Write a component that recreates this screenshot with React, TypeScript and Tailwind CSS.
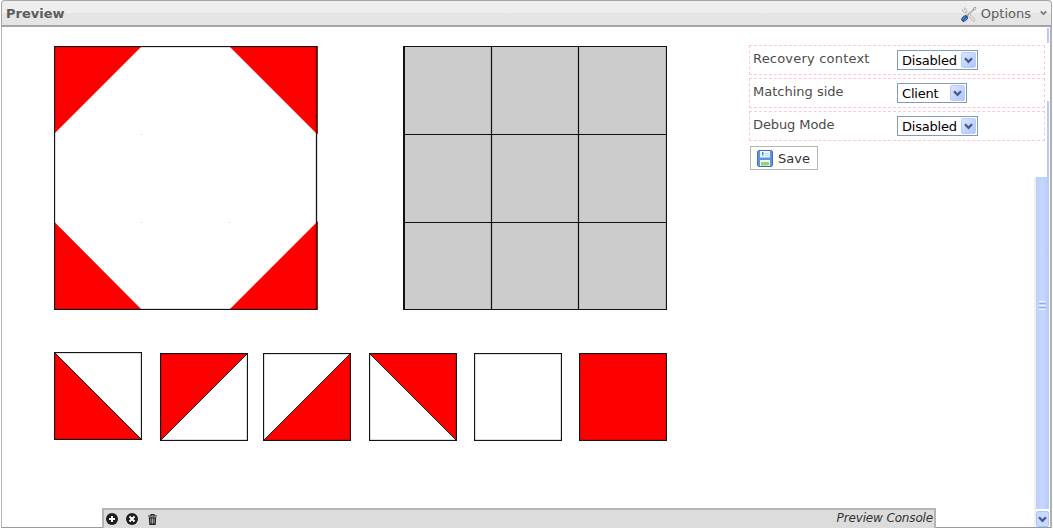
import React from "react";

function Chevron({ className, color = "#435a8c" }: { className: string; color?: string }) {
  return (
    <svg className={className} viewBox="0 0 9 7" fill="none" stroke={color} strokeWidth="2.3">
      <path d="M1 1.3 4.5 4.8 8 1.3" />
    </svg>
  );
}

function Select({ value, width }: { value: string; width: string }) {
  return (
    <div className={`flex h-5 items-center justify-between border border-[#7f9db9] bg-white pl-1 pr-px ${width}`}>
      <span className="pt-px text-[13px] leading-[19px] tracking-[-0.2px] text-black">{value}</span>
      <span className="flex h-4 w-[15px] items-center justify-center rounded-[2px] border border-[#b9cbf8] bg-linear-to-br from-[#dbe6ff] to-[#afc6fb]">
        <Chevron className="h-[7px] w-[9px]" />
      </span>
    </div>
  );
}

function Field({ label, value, width, tracking }: { label: string; value: string; width: string; tracking: string }) {
  return (
    <div className="flex h-[30px] w-[296px] border border-dashed border-[#ffc6d4] pl-[3px] pt-1">
      <div className={`w-36 shrink-0 text-[13px] leading-[18px] text-[#4c4c4c] ${tracking}`}>{label}</div>
      <Select value={value} width={width} />
    </div>
  );
}

function Tile({ fill, diagonal, className = "" }: { fill?: string; diagonal?: string; className?: string }) {
  return (
    <svg className={`block h-[88px] w-[88px] shrink-0 ${className}`} viewBox="0 0 88 88">
      <rect x=".5" y=".5" width="87" height="87" fill="#fff" />
      {fill && <path d={fill} fill="#f00" />}
      {diagonal && <path d={diagonal} stroke="#222" />}
      <rect x=".5" y=".5" width="87" height="87" fill="none" stroke="#151515" strokeWidth="1.3" />
    </svg>
  );
}

function TargetBoard() {
  return (
    <svg className="block h-[264px] w-[264px] shrink-0" viewBox="0 0 264 264">
      <g fill="#f00">
        <path d="M0 0H88L0 88ZM175 0H264V88H263ZM0 175.5 88 264H0ZM264 175V264H175Z" />
        <g opacity=".25">
          <path d="M87 88h1v1h-1zM87 176h1v1h-1zM175 176h1v1h-1z" />
        </g>
      </g>
      <rect x=".5" y=".5" width="262" height="263" fill="none" stroke="#151515" strokeWidth="1.3" />
    </svg>
  );
}

function GridBoard() {
  return (
    <svg className="block h-[264px] w-[264px] shrink-0" viewBox="0 0 264 264">
      <rect width="264" height="264" fill="#ccc" />
      <path d="M88.5 0V264M175.5 0V264M0 88.5H264M0 176.5H264" stroke="#111" strokeWidth="1.2" />
      <path d="M0 .5H263.5V263.5H0" fill="none" stroke="#111" strokeWidth="1.2" />
      <path d="M1 0V264" stroke="#111" strokeWidth="2" />
    </svg>
  );
}

function ToolsIcon() {
  return (
    <svg className="h-4 w-4" viewBox="0 0 16 16" fill="none" strokeLinecap="round">
      <path d="M4 5 13 14" stroke="#aaa" strokeWidth="2.6" />
      <path d="M4 5 13 14" stroke="#f1f1f1" strokeWidth="1.3" />
      <path d="M1 3.8c.4 2 2 3 3.8 2.4C5.9 4.700 5.500 2.300 3.600 1.600L3.900 3.500 2.800 4.500Z" fill="#f3f3f3" stroke="#aaa" strokeWidth=".8" />
      <path d="M6.5 9.500 12.500 3.500" stroke="#aaa" strokeWidth="1.4" />
      <path d="m12.300 3.600.7-2 1.600-.5.200 1.300-1.200 1.500z" fill="#e5e5e5" stroke="#888" strokeWidth=".7" />
      <path d="M2.700 13.300 4.500 11.700" stroke="#2e5c9e" strokeWidth="5" />
      <path d="m2.200 12.800 1.700-1.500M3.600 14.200l1.600-1.400" stroke="#78a6de" strokeWidth=".9" />
    </svg>
  );
}

function SaveIcon() {
  return (
    <svg className="h-[17px] w-4" viewBox="0 0 16 17">
      <path d="M1.5.5h13l1 1v14l-1 1h-13l-1-1v-14z" fill="#5b94de" stroke="#3f70bd" />
      <rect x="3" y="1" width="10" height="6.5" fill="#eef5ff" />
      <rect x="5" y="2" width="1.500" height="3.500" fill="#5585c9" />
      <path d="M8 3.500h4M8 5.500h4" stroke="#bdd3ef" />
      <rect x="3" y="10" width="10" height="6" fill="#edf7e8" />
      <rect x="4" y="12" width="8" height="3.500" fill="#9ace78" />
    </svg>
  );
}

function ConsoleBar() {
  return (
    <div className="absolute bottom-0 left-[102px] flex h-5 w-[834px] items-center border-2 border-b-0 border-[#b5b5b5] bg-[#dcdcdc] pl-[2px] pr-px">
      <svg className="h-3 w-3" viewBox="0 0 12 12">
        <circle cx="6" cy="6" r="6" fill="#1d1d1d" />
        <path d="M6 3v6M3 6h6" stroke="#fff" strokeWidth="1.9" />
      </svg>
      <svg className="ml-2 h-3 w-3" viewBox="0 0 12 12">
        <circle cx="6" cy="6" r="6" fill="#1d1d1d" />
        <path d="m3.500 3.500 5 5m0-5-5 5" stroke="#fff" strokeWidth="1.9" />
      </svg>
      <svg className="ml-[10px] h-[11px] w-[9px]" viewBox="0 0 9 11">
        <path d="M0 2h9M3 1.800V.5h3v1.300" fill="none" stroke="#222" strokeWidth="1.1" />
        <path d="M.8 3.300h7.400L7.700 11H1.300Z" fill="#222" />
        <path d="M2.900 4.500v5M4.500 4.500v5M6.100 4.500v5" stroke="#ccc" strokeWidth=".8" />
      </svg>
      <span className="mb-[2px] ml-auto text-[12px] italic leading-4 tracking-[-0.15px] text-[#333]">Preview Console</span>
    </div>
  );
}

export default function App() {
  return (
    <div className="relative flex h-[528px] w-[1053px] flex-col overflow-hidden bg-white font-['DejaVu_Sans',Verdana,sans-serif]">
      <header className="ml-px mr-px flex h-[27px] shrink-0 items-center rounded-t-[4px] border border-b-2 border-[#a5a5a5] bg-linear-to-b from-[#eeeeee] from-50% to-[#e5e5e5] to-50% pl-1 pr-1 pt-[2px]">
        <h1 className="text-[13px] font-bold leading-4 text-[#5c5c5c]">Preview</h1>
        <div className="ml-auto flex items-center">
          <ToolsIcon />
          <span className="ml-1 text-[13px] leading-4 text-[#5c5c5c]">Options</span>
          <Chevron className="mb-[2px] ml-[9px] h-[6px] w-[7px]" color="#777" />
        </div>
      </header>

      <main className="ml-px mr-px flex min-h-0 flex-1 border-b border-l border-r-2 border-b-[#999] border-l-[#b5b5b5] border-r-[#b0b0b5]">
        <section className="w-[747px] shrink-0 pl-[52px] pt-[19px]">
          <div className="flex gap-[85px]">
            <TargetBoard />
            <GridBoard />
          </div>
          <div className="mt-[42px] flex items-start">
            <Tile fill="M0 0V88H88Z" diagonal="M0 0 88 88" />
            <Tile className="ml-[18px] mt-px" fill="M0 0H88L0 88Z" diagonal="M88 0 0 88" />
            <Tile className="ml-[15px] mt-px" fill="M88 0V88H0Z" diagonal="M88 0 0 88" />
            <Tile className="ml-[18px] mt-px" fill="M0 0H88V88Z" diagonal="M0 0 88 88" />
            <Tile className="ml-[17px] mt-px" />
            <Tile className="ml-[17px] mt-px" fill="M0 0H88V88H0Z" />
          </div>
        </section>

        <aside className="flex min-w-0 flex-1 flex-col">
          <div className="flex h-[150px] shrink-0">
            <form className="flex w-[298px] flex-col gap-[3px] pt-[18px]">
              <Field label="Recovery context" value="Disabled" width="w-[81px]" tracking="tracking-[0.2px]" />
              <Field label="Matching side" value="Client" width="w-[70px]" tracking="tracking-normal" />
              <Field label="Debug Mode" value="Disabled" width="w-[81px]" tracking="tracking-[-0.1px]" />
              <button type="button" className="ml-px mt-[2px] flex h-6 w-[68px] items-center border border-[#b5b5b5] bg-white pl-[6px]">
                <SaveIcon />
                <span className="ml-[5px] pt-[2px] text-[13px] leading-4 text-[#333]">Save</span>
              </button>
            </form>
            <div className="flex w-[2px] flex-col">
              <div className="mt-px h-[15px] bg-[#b5c9fa]" />
              <div className="mt-[58px] flex-1 bg-[#b5c9fa]" />
            </div>
          </div>
          <div className="ml-auto mr-px flex w-[15px] flex-1 flex-col border-l-2 border-[#f1f0ea]">
            <div className="flex flex-1 flex-col items-center justify-center bg-linear-to-r from-[#bdcffb] via-[#c6d6ff] to-[#b4cafa] pb-[76px]">
              <div className="flex h-[9px] w-[7px] flex-col justify-between">
                <div className="h-px bg-[#edf4ff]" />
                <div className="h-px bg-[#8eb0f5]" />
                <div className="h-px bg-[#edf4ff]" />
                <div className="h-px bg-[#8eb0f5]" />
                <div className="h-px bg-[#edf4ff]" />
              </div>
            </div>
            <div className="mt-[2px] flex h-4 items-center justify-center rounded-[2px] border border-[#b1c6f7] bg-[#c8d8ff]">
              <Chevron className="h-[7px] w-[9px]" />
            </div>
          </div>
        </aside>
      </main>
      <ConsoleBar />
    </div>
  );
}
